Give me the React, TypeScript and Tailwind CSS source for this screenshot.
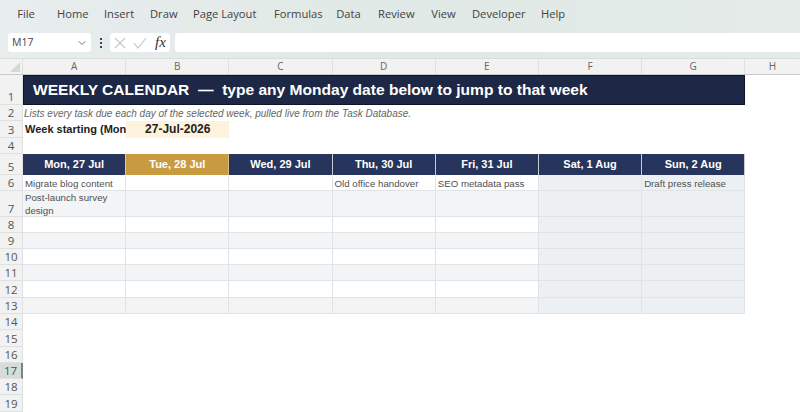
import { ChevronDown } from "lucide-react";

const menu = [
  ["File", 17, 18],
  ["Home", 57, 31],
  ["Insert", 104, 29],
  ["Draw", 150, 26],
  ["Page Layout", 193, 63],
  ["Formulas", 274, 47],
  ["Data", 336, 25],
  ["Review", 378, 36],
  ["View", 431, 25],
  ["Developer", 472, 52],
  ["Help", 541, 24],
] as const;

const columns = ["A", "B", "C", "D", "E", "F", "G"];
const days = ["Mon, 27 Jul", "Tue, 28 Jul", "Wed, 29 Jul", "Thu, 30 Jul", "Fri, 31 Jul", "Sat, 1 Aug", "Sun, 2 Aug"];

const rows: { n: number; h: string; cells: Record<number, string> }[] = [
  { n: 6, h: "h-4", cells: { 0: "Migrate blog content", 3: "Old office handover", 4: "SEO metadata pass", 6: "Draft press release" } },
  { n: 7, h: "h-[26px]", cells: { 0: "Post-launch survey design" } },
  { n: 8, h: "h-4", cells: {} },
  { n: 9, h: "h-4", cells: {} },
  { n: 10, h: "h-4", cells: {} },
  { n: 11, h: "h-4", cells: {} },
  { n: 12, h: "h-[17px]", cells: {} },
  { n: 13, h: "h-4", cells: {} },
];

function RowNum({ n, h, active }: { n: number | string; h: string; active?: boolean }) {
  return (
    <div
      className={`${h} w-[23px] shrink-0 flex items-end justify-center font-['Open_Sans',sans-serif] text-[11.5px] leading-[15px] border-r border-b border-[#dfe0e0] ${
        active ? "bg-[#d9dbda] text-[#1f6b45] border-r-2 border-r-[#6f8a7c]" : "bg-[#f2f2f2] text-[#555555]"
      }`}
    >
      {n}
    </div>
  );
}

function TaskRow({ n, h, cells }: { n: number; h: string; cells: Record<number, string> }) {
  const odd = n % 2 === 1;
  return (
    <div className="flex">
      <RowNum n={n} h={h} />
      {days.map((_, i) => {
        const weekend = i > 4;
        const bg = weekend ? "bg-[#edf0f3]" : odd ? "bg-[#f2f4f5]" : "bg-white";
        return (
          <div
            key={i}
            className={`${h} w-[103.2px] shrink-0 ${bg} border-r border-b border-[#e1e4e6] pl-[2px] pr-1 text-[9.7px] leading-[13px] text-[#505050] ${
              n === 7 ? "" : "flex items-end whitespace-nowrap"
            }`}
          >
            {cells[i]}
          </div>
        );
      })}
    </div>
  );
}

export default function App() {
  return (
    <div className="w-[800px] h-[412px] overflow-hidden bg-white font-['Liberation_Sans',Arial,sans-serif]">
      <div className="h-[59px] bg-linear-to-r from-[#e8eded] via-[#e0e9e6] to-[#e4ebe8] border-b border-[#d9dddc] flex flex-col">
        <div className="h-7 flex items-center font-['Open_Sans','Noto_Sans',sans-serif] text-[11.2px] text-[#424242]">
          {menu.map(([label, x, w], i) => (
            <span key={label} className="whitespace-nowrap text-center" style={{ width: w, marginLeft: i === 0 ? x : x - menu[i - 1][1] - menu[i - 1][2] }}>
              {label}
            </span>
          ))}
        </div>
        <div className="mt-[5px] h-[19px] flex items-center pl-2 text-[#444]">
          <div className="w-[83px] h-[19px] bg-white rounded-[3px] flex items-center justify-between pl-1 pr-[3px] font-['Open_Sans',sans-serif] text-[10.5px]">
            M17
            <ChevronDown size={12} strokeWidth={1.5} />
          </div>
          <div className="w-[19px] flex flex-col items-center gap-[2px]">
            <span className="w-[2px] h-[2px] bg-[#444]" />
            <span className="w-[2px] h-[2px] bg-[#444]" />
            <span className="w-[2px] h-[2px] bg-[#444]" />
          </div>
          <div className="w-[60px] h-[19px] bg-white rounded-[3px] flex items-center pl-[4px] gap-[7px]">
            <svg width="12" height="12" viewBox="0 0 12 12" fill="none" stroke="#c4c6c6" strokeWidth="1.1">
              <path d="M1 1l10 10M11 1L1 11" />
            </svg>
            <svg width="14" height="12" viewBox="0 0 14 12" fill="none" stroke="#c4c6c6" strokeWidth="1.1">
              <path d="M1 6l4 5L13 1" />
            </svg>
            <span className="font-['Liberation_Serif',serif] italic text-[15px] leading-none text-[#333] ml-[1px]">fx</span>
          </div>
          <div className="w-[625px] h-[19px] ml-[5px] bg-white rounded-l-[3px]" />
        </div>
      </div>

      <div className="flex h-4 bg-[#f2f2f2] border-b border-[#c9cbca] font-['Open_Sans',sans-serif] text-[10px] leading-[15px] text-[#666]">
        <div className="w-[23px] shrink-0 relative border-r border-[#dfe0e0]">
          <span className="absolute right-[2px] bottom-[2px] w-0 h-0 border-l-[10px] border-l-transparent border-b-[10px] border-b-[#d6d8d7]" />
        </div>
        {columns.map((c) => (
          <div key={c} className="w-[103.2px] shrink-0 text-center border-r border-[#dfe0e0]">
            {c}
          </div>
        ))}
        <div className="w-[54px] shrink-0 text-center">H</div>
      </div>

      <div className="flex">
        <RowNum n={1} h="h-[30px]" />
        <div className="w-[722px] h-[30px] bg-[#1d2846] border border-[#101525] pl-[9px] flex items-center text-white font-bold text-[15.55px] whitespace-pre">
          WEEKLY CALENDAR  —  type any Monday date below to jump to that week
        </div>
      </div>

      <div className="flex">
        <RowNum n={2} h="h-4" />
        <div className="h-4 pl-[1px] flex items-end italic text-[10px] leading-[14px] text-[#666666] whitespace-nowrap">
          Lists every task due each day of the selected week, pulled live from the Task Database.
        </div>
      </div>

      <div className="flex">
        <RowNum n={3} h="h-[17px]" />
        <div className="w-[103.2px] h-[17px] pl-[2px] overflow-hidden whitespace-nowrap font-bold text-[11px] leading-[17px] text-[#222]">
          Week starting (Mon
        </div>
        <div className="w-[103.2px] h-[17px] bg-[#fdf3dc] text-center font-bold text-[12px] leading-[17px] text-[#222]">
          27-Jul-2026
        </div>
      </div>

      <div className="flex">
        <RowNum n={4} h="h-4" />
      </div>

      <div className="flex">
        <RowNum n={5} h="h-[21px]" />
        {days.map((d, i) => (
          <div
            key={d}
            className={`w-[103.2px] h-[21px] shrink-0 text-center font-bold text-[11px] leading-[20px] text-white border-r ${
              i === 1 ? "bg-[#c89b40] border-[#d8be86]" : "bg-[#27345b] border-[#c5cad4]"
            }`}
          >
            {d}
          </div>
        ))}
      </div>

      {rows.map((r) => (
        <TaskRow key={r.n} {...r} />
      ))}

      {[14, 15, 16, 17, 18, 19].map((n) => (
        <div key={n} className="flex">
          <RowNum n={n} h="h-[16.25px]" active={n === 17} />
        </div>
      ))}
    </div>
  );
}
